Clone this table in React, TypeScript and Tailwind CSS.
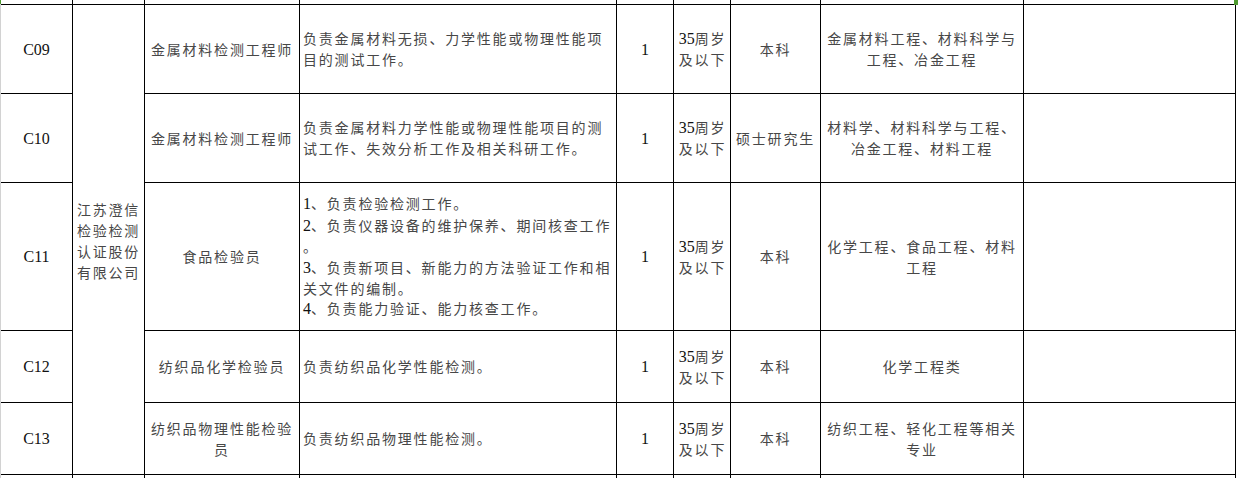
import React from "react";

type Row = {
    code: string;
    position: string[];
    duties: string[];
    count: string;
    edu: string;
    major: string[];
    dense?: boolean;
};

const rows: Row[] = [
    {
        code: "C09",
        position: ["金属材料检测工程师"],
        duties: ["负责金属材料无损、力学性能或物理性能项", "目的测试工作。"],
        count: "1",
        edu: "本科",
        major: ["金属材料工程、材料科学与", "工程、冶金工程"],
    },
    {
        code: "C10",
        position: ["金属材料检测工程师"],
        duties: ["负责金属材料力学性能或物理性能项目的测", "试工作、失效分析工作及相关科研工作。"],
        count: "1",
        edu: "硕士研究生",
        major: ["材料学、材料科学与工程、", "冶金工程、材料工程"],
    },
    {
        code: "C11",
        position: ["食品检验员"],
        duties: [
            "1、负责检验检测工作。",
            "2、负责仪器设备的维护保养、期间核查工作",
            "。",
            "3、负责新项目、新能力的方法验证工作和相",
            "关文件的编制。",
            "4、负责能力验证、能力核查工作。",
        ],
        count: "1",
        edu: "本科",
        major: ["化学工程、食品工程、材料", "工程"],
        dense: true,
    },
    {
        code: "C12",
        position: ["纺织品化学检验员"],
        duties: ["负责纺织品化学性能检测。"],
        count: "1",
        edu: "本科",
        major: ["化学工程类"],
    },
    {
        code: "C13",
        position: ["纺织品物理性能检验", "员"],
        duties: ["负责纺织品物理性能检测。"],
        count: "1",
        edu: "本科",
        major: ["纺织工程、轻化工程等相关", "专业"],
    },
];

const latin = "font-['Liberation_Serif',serif] text-[16px] tracking-normal text-[#111]";

// 半角の英数字だけ Times 相当で少し大きく
function Txt({ s }: { s: string }) {
    const parts = s.split(/([0-9A-Za-z]+)/);
    return (
        <>
            {parts.map((p, i) =>
                /^[0-9A-Za-z]+$/.test(p) ? (
                    <span key={i} className={latin}>
                        {p}
                    </span>
                ) : (
                    <span key={i}>{p}</span>
                )
            )}
        </>
    );
}

function Lines({ lines }: { lines: string[] }) {
    return (
        <div>
            {lines.map((l, i) => (
                <div key={i} className="whitespace-nowrap">
                    <Txt s={l} />
                </div>
            ))}
        </div>
    );
}

const cell = "flex items-center justify-center bg-white text-center";

export default function App() {
    return (
        <div className="relative flex h-[478px] w-[1238px] overflow-hidden bg-white font-['Noto_Sans_CJK_SC',sans-serif] text-[14px] leading-[21px] tracking-[1.8px] text-[#474747]">
            {/* 左端の薄い枠 */}
            <div className="flex w-px flex-col bg-[#d2d2d2]">
                <div className="h-[4px] bg-[#4e9a2f]" />
            </div>

            <div className="grid grid-cols-[71px_71px_154px_316px_56px_56px_89px_202px_211px] grid-rows-[4px_88px_88px_147px_71px_71px_40px] gap-px self-start border-r border-black bg-black">
                {/* 上の行（見切れ） */}
                {Array.from({ length: 9 }).map((_, i) => (
                    <div key={"t" + i} className="bg-white" />
                ))}

                {/* 会社名（結合セル） */}
                <div className="col-start-2 row-span-5 row-start-2 flex items-center justify-center bg-white pt-[3px]">
                    <Lines lines={["江苏澄信", "检验检测", "认证股份", "有限公司"]} />
                </div>

                {rows.map((r) => (
                    <React.Fragment key={r.code}>
                        <div className={`${cell} col-start-1 ${latin}`}>{r.code}</div>
                        <div className={`${cell} col-start-3`}>
                            <Lines lines={r.position} />
                        </div>
                        <div
                            className={`flex items-center bg-white pl-[3px] text-left ${
                                r.dense ? "leading-[20.4px]" : ""
                            }`}
                        >
                            <Lines lines={r.duties} />
                        </div>
                        <div className={`${cell} ${latin}`}>{r.count}</div>
                        <div className={`${cell} pl-px`}>
                            <Lines lines={["35周岁", "及以下"]} />
                        </div>
                        <div className={cell}>
                            <Lines lines={[r.edu]} />
                        </div>
                        <div className={cell}>
                            <Lines lines={r.major} />
                        </div>
                        <div className="bg-white" />
                    </React.Fragment>
                ))}

                {/* 下の行（見切れ） */}
                {Array.from({ length: 9 }).map((_, i) => (
                    <div key={"b" + i} className="bg-white" />
                ))}
            </div>

            {/* 右上のフィルハンドル */}
            <div className="absolute top-0 left-[1234px] h-[5px] w-[4px] bg-[#4e9a2f]" />
        </div>
    );
}
